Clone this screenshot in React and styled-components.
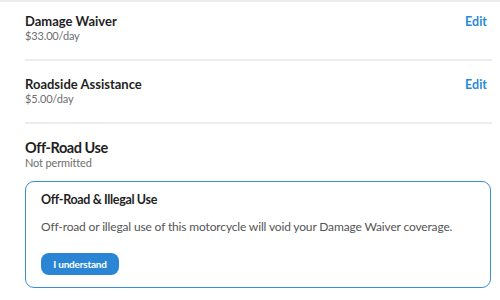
import React from "react";
import styled, { createGlobalStyle } from "styled-components";

const Global = createGlobalStyle`
  html, body { margin: 0; padding: 0; background: #fff; }
  body { font-family: Lato, "Open Sans", sans-serif; color: #222; }
`;

const Page = styled.div`
  width: 500px;
  height: 300px;
  overflow: hidden;
  border-top: 2px solid #ececec;
  box-sizing: border-box;
  padding: 0 8px 0 25px;
`;

const Row = styled.div`
  display: flex;
  justify-content: space-between;
  align-items: flex-start;
  padding: ${(p) => p.$top}px 5px 0 0;
  height: ${(p) => p.$h}px;
  box-sizing: border-box;
  border-bottom: 2px solid #ececec;
`;

const Info = styled.div`
  display: flex;
  flex-direction: column;
`;

const Title = styled.div`
  font-size: 13px;
  font-weight: 700;
  line-height: 15px;
  color: #1f1f1f;
`;

const Sub = styled.div`
  font-size: 11px;
  line-height: 14px;
  letter-spacing: -0.15px;
  color: #6e6e6e;
`;

const EditLink = styled.a`
  font-size: 12.5px;
  font-weight: 700;
  line-height: 15px;
  color: #2b8ad8;
  cursor: pointer;
`;

const Section = styled.div`
  padding-top: 15px;
  padding-right: 1px;
`;

const SectionTitle = styled.div`
  font-size: 14.5px;
  font-weight: 700;
  line-height: 17px;
  letter-spacing: -0.45px;
  color: #1f1f1f;
`;

const Box = styled.div`
  margin-top: 11px;
  border: 1.5px solid #3a8ed6;
  border-radius: 9px;
  padding: 10px 15px 12px 15px;
`;

const BoxTitle = styled.div`
  font-size: 12.5px;
  font-weight: 700;
  line-height: 16px;
  letter-spacing: -0.35px;
  color: #1f1f1f;
`;

const BoxText = styled.p`
  margin: 10.5px 0 0;
  font-size: 12px;
  line-height: 16px;
  letter-spacing: -0.15px;
  color: #555;
  white-space: nowrap;
`;

const Button = styled.button`
  display: block;
  margin-top: 18px;
  height: 22px;
  width: 78px;
  border: none;
  border-radius: 8px;
  background: #2a86d4;
  color: #fff;
  font-family: Lato, sans-serif;
  font-size: 10px;
  font-weight: 700;
  letter-spacing: -0.2px;
  padding: 0;
  cursor: pointer;
`;

export default function App() {
  return (
    <>
      <Global />
      <Page>
        <Row $h={59} $top={12}>
          <Info>
            <Title>Damage Waiver</Title>
            <Sub>$33.00/day</Sub>
          </Info>
          <EditLink>Edit</EditLink>
        </Row>
        <Row $h={63} $top={16}>
          <Info>
            <Title>Roadside Assistance</Title>
            <Sub>$5.00/day</Sub>
          </Info>
          <EditLink>Edit</EditLink>
        </Row>
        <Section>
          <SectionTitle>Off-Road Use</SectionTitle>
          <Sub>Not permitted</Sub>
          <Box>
            <BoxTitle>Off-Road &amp; Illegal Use</BoxTitle>
            <BoxText>
              Off-road or illegal use of this motorcycle will void your Damage Waiver coverage.
            </BoxText>
            <Button>I understand</Button>
          </Box>
        </Section>
      </Page>
    </>
  );
}
